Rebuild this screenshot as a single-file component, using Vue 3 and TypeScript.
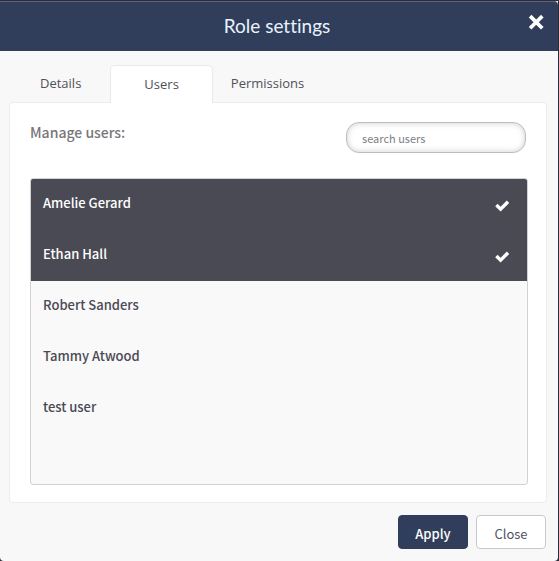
<script setup lang="ts">
import { computed, ref } from 'vue'

interface User {
  id: number
  name: string
  selected: boolean
}

const tabs = ['Details', 'Users', 'Permissions']
const activeTab = ref('Users')
const query = ref('')

const users = ref<User[]>([
  { id: 1, name: 'Amelie Gerard', selected: true },
  { id: 2, name: 'Ethan Hall', selected: true },
  { id: 3, name: 'Robert Sanders', selected: false },
  { id: 4, name: 'Tammy Atwood', selected: false },
  { id: 5, name: 'test user', selected: false },
])

const visibleUsers = computed(() =>
  users.value.filter((u) => u.name.toLowerCase().includes(query.value.toLowerCase())),
)
</script>

<template>
  <section class="dialog" role="dialog" aria-labelledby="dialog-title">
    <header class="header">
      <h1 id="dialog-title" class="title">Role settings</h1>
      <button class="dismiss" type="button" aria-label="Close dialog">
        <svg viewBox="0 0 16 16" width="16" height="16" aria-hidden="true">
          <path d="M3.4 3.4 L13 13 M13 3.4 L3.4 13" fill="none" stroke="#fff" stroke-width="3.7" stroke-linecap="square" />
        </svg>
      </button>
    </header>

    <div class="body">
      <div class="tabs" role="tablist">
        <button
          v-for="tab in tabs"
          :key="tab"
          class="tab"
          :class="{ active: tab === activeTab }"
          type="button"
          role="tab"
          :aria-selected="tab === activeTab"
          @click="activeTab = tab"
        >
          {{ tab }}
        </button>
      </div>

      <div class="panel" role="tabpanel">
        <div class="toolbar">
          <h2 class="heading">Manage users:</h2>
          <input v-model="query" class="search" type="text" placeholder="search users" aria-label="search users" />
        </div>

        <ul class="list">
          <li v-for="user in visibleUsers" :key="user.id">
            <label class="row" :class="{ selected: user.selected }">
              <span class="name">{{ user.name }}</span>
              <input v-model="user.selected" class="box" type="checkbox" />
              <svg v-if="user.selected" class="check" viewBox="0 0 14 12" width="14" height="12" aria-hidden="true">
                <path d="M2.6 6.2 L5.6 9.2 L11.8 3" fill="none" stroke="#fff" stroke-width="3.4" stroke-linecap="square" />
              </svg>
            </label>
          </li>
        </ul>
      </div>

      <footer class="footer">
        <button class="button primary" type="button">Apply</button>
        <button class="button" type="button">Close</button>
      </footer>
    </div>
  </section>
</template>

<style>
body {
  background: #2b2b3a;
}
</style>

<style scoped>
.dialog {
  box-sizing: border-box;
  min-height: 100vh;
  margin-right: 1px;
  border-top: 1px solid #2b2d3d;
  background: #f8f8f8;
  border-radius: 0 0 4px 4px;
  font-family: 'Noto Sans CJK JP', 'Open Sans', sans-serif;
  color: #4a4a54;
}

button,
input {
  font-family: inherit;
}

.header {
  box-sizing: border-box;
  display: grid;
  grid-template-columns: 1fr auto 1fr;
  height: 50px;
  padding: 0 14px 0 10px;
  border-top: 1px solid #626576;
  border-radius: 0 4px 0 0;
  background: #303e5b;
}

.title {
  grid-column: 2;
  margin: 0;
  font: 400 19px/48px Lato, sans-serif;
  font-variant-ligatures: none;
  color: #e9f2fb;
}

.dismiss {
  justify-self: end;
  align-self: start;
  display: flex;
  margin-top: 12px;
  padding: 0;
  border: 0;
  background: none;
  cursor: pointer;
}

.body {
  padding: 14px 11px 12px 9px;
}

.tabs {
  position: relative;
  display: flex;
  padding-left: 13px;
}

.tab {
  box-sizing: border-box;
  height: 38px;
  margin-bottom: -1px;
  padding: 0 18px 2px;
  border: 0;
  background: none;
  font: 400 13px/34px 'Open Sans', sans-serif;
  color: #505058;
  cursor: pointer;
}

.tab.active {
  margin-left: 11px;
  padding: 0 33px 2px;
  border: 1px solid #e9e9e9;
  border-bottom: 0;
  border-radius: 5px 5px 0 0;
  background: #fff;
}

.panel {
  padding: 19px 18px 17px 20px;
  border: 1px solid #ececec;
  border-radius: 4px;
  background: #fff;
}

.toolbar {
  display: flex;
  justify-content: space-between;
  align-items: flex-start;
  padding-right: 2px;
}

.heading {
  margin: 0;
  font-size: 14px;
  font-weight: 500;
  line-height: 20px;
  color: #77777a;
}

.search {
  box-sizing: border-box;
  width: 180px;
  height: 31px;
  padding: 0 15px;
  border: 1px solid #bcbcbc;
  border-radius: 13px;
  background: #fff;
  box-shadow: inset 0 0 6px rgba(0, 0, 0, 0.2);
  font-size: 11px;
  color: #4a4a54;
  outline: none;
}

.search::placeholder {
  color: #808084;
  opacity: 1;
}

.list {
  min-height: 305px;
  margin: 25px 0 0;
  padding: 0;
  border: 1px solid #d2d2d4;
  border-radius: 3px;
  background: #f9f9f9;
  list-style: none;
  overflow: hidden;
}

.row {
  box-sizing: border-box;
  position: relative;
  display: flex;
  justify-content: space-between;
  align-items: center;
  height: 51px;
  padding: 0 18px 4px 12px;
  font-size: 13px;
  font-weight: 500;
  line-height: 20px;
  cursor: pointer;
}

.row.selected {
  background: #4a4a54;
  color: #fff;
}

.box {
  position: absolute;
  inset: 0;
  margin: 0;
  opacity: 0;
  cursor: pointer;
}

.check {
  margin-top: 6px;
}

.footer {
  display: flex;
  justify-content: flex-end;
  gap: 8px;
  padding: 12px 1px 0 0;
}

.button {
  box-sizing: border-box;
  width: 70px;
  height: 34px;
  padding: 2px 0 0;
  border: 1px solid #c9c9cc;
  border-radius: 4px;
  background: #fff;
  font-size: 13px;
  color: #505460;
  cursor: pointer;
}

.button.primary {
  border-color: #303e5b;
  background: #303e5b;
  font-weight: 500;
  color: #fff;
}
</style>
